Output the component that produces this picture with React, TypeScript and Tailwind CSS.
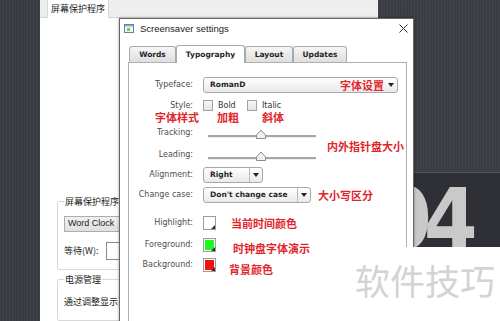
import clsx from 'clsx';

const cjk = "font-['Noto_Sans_CJK_SC',sans-serif]";
const note =
    "font-['Noto_Sans_CJK_SC',sans-serif] whitespace-nowrap text-[11px] font-bold leading-[12px] text-[#e1252b] [text-shadow:0_0_1px_#fff,0_0_1px_#fff]";
const labelCls =
    "w-[64px] shrink-0 text-right font-['DejaVu_Sans',sans-serif] text-[8px] leading-[10px] text-[#4d4d4d]";
const boldUi = "font-['DejaVu_Sans',sans-serif] text-[7.5px] font-bold text-[#1f1f1f]";

function Caret() {
    return (
        <svg width="6" height="4" viewBox="0 0 6 4">
            <polygon points="0,0 6,0 3,4" fill="#222" />
        </svg>
    );
}

interface DropdownProps {
    value: string;
    className: string;
    split?: boolean;
    children?: React.ReactNode;
}

function Dropdown({ value, className, split, children }: DropdownProps) {
    return (
        <div
            className={clsx(
                'flex h-[16px] items-center rounded-[3px] border border-[#a8a8a8] bg-gradient-to-b from-white to-[#e9e9e9] pl-[6px]',
                className,
            )}
        >
            <span className={clsx(boldUi, 'flex-1 whitespace-nowrap')}>{value}</span>
            {children}
            {split && <span className="h-[14px] border-l border-[#b9b9b9]" />}
            <span className="flex w-[12px] shrink-0 justify-center">
                <Caret />
            </span>
        </div>
    );
}

function Checkbox() {
    return (
        <span className="h-[11px] w-[10px] shrink-0 border border-[#a3a3a3] bg-gradient-to-b from-[#f8f8f8] to-[#e4e4e4]" />
    );
}

function Slider() {
    return (
        <div className="relative ml-[15px] h-[13px] w-[108px]">
            <div className="absolute left-0 right-0 top-[8px] h-[2px] bg-[#a7a7a7] shadow-[0_1px_0_#eee]" />
            <svg className="absolute left-[48px] top-[2px]" width="10" height="10" viewBox="0 0 10 10">
                <polygon
                    points="0.5,9.5 0.5,6 5,1 9.5,6 9.5,9.5"
                    fill="#f1f1f1"
                    stroke="#8d8d8d"
                />
            </svg>
        </div>
    );
}

function Swatch({ color }: { color: string }) {
    return (
        <span className="relative h-[14px] w-[13px] shrink-0 border border-[#9c9c9c] bg-white p-px">
            <span className="block h-full w-full" style={{ background: color }} />
            <svg className="absolute bottom-0 right-0" width="4" height="4" viewBox="0 0 4 4">
                <polygon points="4,0 4,4 0,4" fill="#333" />
            </svg>
        </span>
    );
}

function Row({
    label,
    className,
    children,
}: {
    label: string;
    className: string;
    children: React.ReactNode;
}) {
    return (
        <div className={clsx('flex items-center', className)}>
            <span className={labelCls}>{label}</span>
            {children}
        </div>
    );
}

function TitleIcon() {
    return (
        <svg width="10" height="9" viewBox="0 0 10 9">
            <rect x="0.5" y="0.5" width="9" height="8" fill="#eef4fa" stroke="#5c84ad" />
            <rect x="1" y="1" width="8" height="1.5" fill="#8fb0d0" />
            <rect x="3" y="4" width="3" height="3" fill="#8cc63f" />
        </svg>
    );
}

function Tab({ label, active, w }: { label: string; active?: boolean; w: string }) {
    return (
        <div
            className={clsx(
                'flex items-center justify-center rounded-t-[3px] border border-[#aaaaaa]',
                w,
                active
                    ? 'relative z-10 -mb-px h-[18px] border-b-0 bg-white'
                    : 'h-[16px] border-b-0 bg-gradient-to-b from-[#f6f6f6] to-[#dedede]',
            )}
        >
            <span className={boldUi}>{label}</span>
        </div>
    );
}

function Dialog() {
    return (
        <div className="absolute left-[119px] top-[18px] flex h-[320px] w-[295px] flex-col border border-[#666] bg-white shadow-[0_0_3px_rgba(0,0,0,0.35)]">
            {/* title bar */}
            <div className="flex h-[20px] items-center">
                <span className="ml-[4px] flex">
                    <TitleIcon />
                </span>
                <span className="ml-[6px] font-['Liberation_Sans',sans-serif] text-[9.5px] text-[#1a1a1a]">
                    Screensaver settings
                </span>
                <svg className="ml-auto mr-[5px]" width="9" height="9" viewBox="0 0 9 9">
                    <path d="M0.5 0.5 L8.5 8.5 M8.5 0.5 L0.5 8.5" stroke="#333" strokeWidth="1" />
                </svg>
            </div>

            {/* tabs */}
            <div className="ml-[9px] mt-[6px] flex h-[17px] items-end">
                <Tab label="Words" w="w-[47px]" />
                <Tab label="Typography" w="w-[69px]" active />
                <Tab label="Layout" w="w-[48px]" />
                <Tab label="Updates" w="w-[54px]" />
            </div>

            {/* panel */}
            <div className="ml-[8px] mr-[6px] h-[280px] border border-[#b0b0b0] bg-white">
                <Row label="Typeface:" className="mt-[14px] h-[16px]">
                    <Dropdown value="RomanD" className="ml-[10px] w-[195px]">
                        <span className={clsx(note, 'mr-[1px]')}>字体设置</span>
                    </Dropdown>
                </Row>

                <Row label="Style:" className="mt-[7px] h-[12px]">
                    <span className="ml-[10px] flex items-center">
                        <Checkbox />
                        <span className="ml-[5px] w-[29px] font-['DejaVu_Sans',sans-serif] text-[8px] text-[#333]">
                            Bold
                        </span>
                        <Checkbox />
                        <span className="ml-[5px] font-['DejaVu_Sans',sans-serif] text-[8px] text-[#333]">
                            Italic
                        </span>
                    </span>
                </Row>

                <div className="-mt-px flex h-[12px] items-center">
                    <span className={clsx(note, 'w-[70px] text-right')}>字体样式</span>
                    <span className={clsx(note, 'ml-[18px] w-[22px]')}>加粗</span>
                    <span className={clsx(note, 'ml-[23px]')}>斜体</span>
                </div>

                <div className="mt-[4px] flex items-center">
                    <div className="w-[191px]">
                        <Row label="Tracking:" className="h-[13px]">
                            <Slider />
                        </Row>
                        <Row label="Leading:" className="mt-[9px] h-[13px]">
                            <Slider />
                        </Row>
                    </div>
                    <span className={clsx(note, 'ml-[7px] mt-[3px]')}>内外指针盘大小</span>
                </div>

                <Row label="Alignment:" className="mt-[5px] h-[16px]">
                    <Dropdown value="Right" className="ml-[10px] w-[60px]" split />
                </Row>

                <Row label="Change case:" className="mt-[4px] h-[16px]">
                    <Dropdown value="Don't change case" className="ml-[10px] w-[108px]" split />
                    <span className={clsx(note, 'ml-[7px]')}>大小写区分</span>
                </Row>

                <Row label="Highlight:" className="mt-[13px] h-[14px]">
                    <span className="ml-[10px] flex">
                        <Swatch color="#ffffff" />
                    </span>
                    <span className={clsx(note, 'ml-[15px] mt-[1px]')}>当前时间颜色</span>
                </Row>

                <Row label="Foreground:" className="mt-[8px] h-[14px]">
                    <span className="ml-[10px] flex">
                        <Swatch color="#1ff51f" />
                    </span>
                    <span className={clsx(note, 'ml-[17px] mt-[7px]')}>时钟盘字体演示</span>
                </Row>

                <Row label="Background:" className="mt-[6px] h-[14px]">
                    <span className="ml-[10px] flex">
                        <Swatch color="#f50f0f" />
                    </span>
                    <span className={clsx(note, 'ml-[13px] mt-[8px]')}>背景颜色</span>
                </Row>
            </div>
        </div>
    );
}

function LeftPanel() {
    return (
        <div className={clsx('flex w-[338px] shrink-0 flex-col bg-white text-[#222]', cjk)}>
            <div className="flex h-[18px] items-end border-b border-[#d6d6d6] bg-[#eeeeee] pl-[7px]">
                <div className="-mb-px flex h-[18px] items-center border-x border-[#d6d6d6] bg-white px-[3px] text-[9px]">
                    屏幕保护程序
                </div>
            </div>

            <div className="ml-[17px] mt-[183px] w-[300px] rounded-[2px] border border-[#d8d8d8] pb-[9px] pl-[6px]">
                <div className="-mt-[6px] w-fit bg-white px-px text-[9px] leading-[11px]">
                    屏幕保护程序(S)
                </div>
                <div className="mt-[9px] flex h-[16px] w-[120px] items-center border border-[#adadad] bg-gradient-to-b from-[#f0f0f0] to-[#e0e0e0] pl-[3px] font-['Liberation_Sans',sans-serif] text-[9px]">
                    Word Clock
                </div>
                <div className="mt-[10px] flex h-[18px] items-center">
                    <span className="w-[42px] text-[9px]">等待(W):</span>
                    <span className="h-[18px] w-[50px] border border-[#8a8a8a] bg-white" />
                </div>
            </div>

            <div className="ml-[17px] mt-[9px] w-[300px] flex-1 rounded-[2px] border border-[#d8d8d8] pl-[6px]">
                <div className="-mt-[6px] w-fit bg-white px-px text-[9px] leading-[11px]">电源管理</div>
                <div className="mt-[10px] whitespace-nowrap text-[9px]">
                    通过调整显示亮度和其他电源设置以节省能源
                </div>
            </div>
        </div>
    );
}

function Backdrop() {
    return (
        <div className="flex w-[122px] shrink-0 flex-col">
            <div className="h-[172px] bg-[#3a3d44] bg-[image:repeating-linear-gradient(90deg,rgba(255,255,255,0.03)_0_1px,transparent_1px_3px)]" />
            <div className="h-px bg-[#50535b]" />
            <div className="h-[74px] overflow-hidden bg-[#2e3036] pt-[3px]">
                <div className="font-['DejaVu_Sans_Condensed',sans-serif] text-[86px] font-bold leading-[86px] tracking-[-8px] text-[#c9c9c9]">
                    04
                </div>
            </div>
            <div className="flex-1 bg-white" />
        </div>
    );
}

export default function App() {
    return (
        <div className="relative flex h-[321px] w-[500px] overflow-hidden bg-white">
            <div className="w-[40px] shrink-0 bg-[#383b42] bg-[image:repeating-linear-gradient(90deg,rgba(255,255,255,0.03)_0_1px,transparent_1px_3px)]" />
            <LeftPanel />
            <Backdrop />
            <Dialog />
            {/* watermark overlay */}
            <div className="absolute left-[322px] top-[247px] h-[74px] w-[178px] bg-white pl-[33px] pt-[13px]">
                <span className={clsx(cjk, 'text-[35px] leading-[40px] text-[#d3d3d3]')}>软件技巧</span>
            </div>
        </div>
    );
}
